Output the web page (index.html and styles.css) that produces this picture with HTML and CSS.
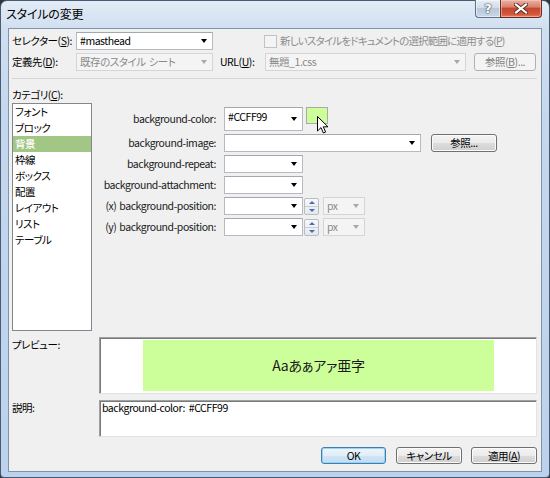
FILE: index.html
```html
<!DOCTYPE html>
<html lang="ja">
<head>
<meta charset="utf-8">
<title>スタイルの変更</title>
<link rel="stylesheet" href="styles.css">
</head>
<body>
<div class="window">
  <div class="titlebar">
    <span class="title">スタイルの変更</span>
    <div class="caption">
      <div class="cap-help">?</div>
      <div class="cap-close">
        <svg width="14" height="11" viewBox="0 0 14 11">
          <path d="M2 1.5 L12 9.5 M12 1.5 L2 9.5" stroke="#5a2a22" stroke-width="4" stroke-linecap="square"/>
          <path d="M2 1.5 L12 9.5 M12 1.5 L2 9.5" stroke="#ffffff" stroke-width="2.2" stroke-linecap="square"/>
        </svg>
      </div>
    </div>
  </div>
  <div class="client">
    <div class="row">
      <span class="lbl-top">セレクター(<u>S</u>):</span>
      <div class="combo w-sel"><span class="ctext">#masthead</span><span class="arrow"></span></div>
      <span class="chk"></span>
      <span class="chk-label">新しいスタイルをドキュメントの選択範囲に適用する(<u>P</u>)</span>
    </div>
    <div class="row row2">
      <span class="lbl-top">定義先(<u>D</u>):</span>
      <div class="combo w-sel disabled"><span class="ctext">既存のスタイル シート</span><span class="arrow"></span></div>
      <span class="lbl-url">URL(<u>U</u>):</span>
      <div class="combo w-url disabled"><span class="ctext">無題_1.css</span><span class="arrow"></span></div>
      <div class="btn btn-ref disabled">参照(<u>B</u>)...</div>
    </div>
    <div class="sep"></div>
    <div class="cat-label">カテゴリ(<u>C</u>):</div>
    <div class="main">
      <ul class="list">
        <li>フォント</li>
        <li>ブロック</li>
        <li class="sel">背景</li>
        <li>枠線</li>
        <li>ボックス</li>
        <li>配置</li>
        <li>レイアウト</li>
        <li>リスト</li>
        <li>テーブル</li>
      </ul>
      <div class="props">
        <span class="plabel">background-color:</span>
        <div class="ctl ctl-top">
          <div class="combo w-s tall"><span class="ctext">#CCFF99</span><span class="arrow"></span></div>
          <div class="swatch">
            <svg class="cursor" width="12" height="18" viewBox="0 0 12 18">
              <path d="M0.5 0.5 L0.5 15 L4 11.6 L6.4 17 L8.6 16 L6.3 10.8 L11 10.8 Z" fill="#ffffff" stroke="#000000" stroke-width="1" stroke-linejoin="round"/>
            </svg>
          </div>
        </div>

        <span class="plabel">background-image:</span>
        <div class="ctl">
          <div class="combo w-img"><span class="ctext"></span><span class="arrow"></span></div>
          <div class="btn btn-browse">参照...</div>
        </div>

        <span class="plabel">background-repeat:</span>
        <div class="ctl">
          <div class="combo w-s"><span class="ctext"></span><span class="arrow"></span></div>
        </div>

        <span class="plabel">background-attachment:</span>
        <div class="ctl">
          <div class="combo w-s"><span class="ctext"></span><span class="arrow"></span></div>
        </div>

        <span class="plabel">(x) background-position:</span>
        <div class="ctl">
          <div class="combo w-s"><span class="ctext"></span><span class="arrow"></span></div>
          <div class="spin"><span class="spin-up"><i></i></span><span class="spin-dn"><i></i></span></div>
          <div class="combo w-px disabled"><span class="ctext">px</span><span class="arrow"></span></div>
        </div>

        <span class="plabel">(y) background-position:</span>
        <div class="ctl">
          <div class="combo w-s"><span class="ctext"></span><span class="arrow"></span></div>
          <div class="spin"><span class="spin-up"><i></i></span><span class="spin-dn"><i></i></span></div>
          <div class="combo w-px disabled"><span class="ctext">px</span><span class="arrow"></span></div>
        </div>
      </div>
    </div>
    <div class="box-row preview-row">
      <span class="box-label">プレビュー:</span>
      <div class="sunken preview">
        <div class="sample">Aaあぁアァ亜字</div>
      </div>
    </div>
    <div class="box-row desc-row">
      <span class="box-label">説明:</span>
      <div class="sunken desc">background-color: #CCFF99</div>
    </div>
    <div class="buttons">
      <div class="btn btn-dlg btn-ok">OK</div>
      <div class="btn btn-dlg btn-cancel">キャンセル</div>
      <div class="btn btn-dlg btn-apply">適用(<u>A</u>)</div>
    </div>
  </div>
</div>
</body>
</html>
```

FILE: styles.css
```css
* { box-sizing: border-box; }

body {
  margin: 0;
  background: #2e3640;
  font-family: "Noto Sans CJK JP", "Noto Sans", sans-serif;
  font-size: 10.5px;
  letter-spacing: -0.45px;
  word-spacing: 1px;
  font-feature-settings: "palt";
  color: #000;
}

u { text-decoration: underline; text-underline-offset: 1px; }

.window {
  width: 550px;
  height: 478px;
  border: 1px solid #4a5a70;
  border-radius: 7px 7px 4px 4px;
  background: linear-gradient(to bottom, #e3ecf6 0, #d0dff0 28px, #c3d7ee 120px, #bcd2ec 100%);
  padding: 0 7px 5px 7px;
  display: flex;
  flex-direction: column;
}

.titlebar {
  height: 27px;
  display: flex;
  justify-content: space-between;
  flex: none;
}

.title {
  font-size: 12px;
  letter-spacing: -0.2px;
  line-height: 14px;
  padding-top: 6px;
  margin-left: -2px;
}

.caption {
  display: flex;
  height: 18px;
  margin-top: -1px;
}

.cap-help {
  width: 25px;
  height: 18px;
  border: 1px solid #5f7189;
  border-right: none;
  border-top: none;
  border-radius: 0 0 0 4px;
  background: linear-gradient(to bottom, #e6edf5 0, #d3dee9 45%, #b9c9da 50%, #c9d7e5 100%);
  box-shadow: inset 0 0 0 1px rgba(255,255,255,0.5);
  color: #fff;
  font: bold 13px/17px "DejaVu Sans", sans-serif;
  letter-spacing: 0;
  text-align: center;
  text-shadow: 0 0 1px #3d4a5a, 0 0 1px #3d4a5a, 0 0 2px #55667a;
}

.cap-close {
  width: 42px;
  height: 18px;
  border: 1px solid #6b2a20;
  border-top: none;
  border-radius: 0 0 4px 0;
  background: linear-gradient(to bottom, #eab1a3 0, #d98370 40%, #c4472f 50%, #d4583d 85%, #e0856c 100%);
  box-shadow: inset 0 0 0 1px rgba(255,220,210,0.45);
  display: flex;
  align-items: center;
  justify-content: center;
}

.client {
  flex: 1;
  border: 1px solid #7f93ab;
  background: #f0f0f0;
  padding: 3px 4px 0 3px;
  display: flex;
  flex-direction: column;
}

.row {
  display: flex;
  align-items: center;
  height: 18px;
  flex: none;
}

.row2 { margin-top: 3px; }

.lbl-top { width: 64px; line-height: 14px; white-space: nowrap; flex: none; }

.combo {
  height: 18px;
  border: 1px solid #b6b9c1;
  border-top-color: #a4a7af;
  background: #fff;
  display: flex;
  align-items: center;
  padding: 0 5px 0 3px;
  flex: none;
}

.ctext {
  flex: 1;
  line-height: 14px;
  white-space: nowrap;
  overflow: hidden;
}

.arrow {
  width: 0;
  height: 0;
  border-left: 3.5px solid transparent;
  border-right: 3.5px solid transparent;
  border-top: 4px solid #000;
  flex: none;
}

.combo.disabled {
  background: #f4f4f4;
  border-color: #d5d5d5;
  color: #8a8a8a;
}

.combo.disabled .arrow { border-top-color: #a8a8a8; }

.w-sel { width: 137px; }
.w-url { width: 201px; }
.w-s { width: 79px; }
.w-img { width: 197px; }
.w-px { width: 42px; height: 18px; }

.chk {
  width: 13px;
  height: 13px;
  border: 1px solid #c2c2c2;
  background: #f4f4f4;
  margin-left: 51px;
  flex: none;
}

.chk-label {
  margin-left: 3px;
  color: #8d8d8d;
  line-height: 14px;
  letter-spacing: -0.8px;
  white-space: nowrap;
}

.lbl-url {
  margin-left: 7px;
  width: 45px;
  line-height: 14px;
  white-space: nowrap;
  flex: none;
}

.btn {
  display: flex;
  align-items: center;
  justify-content: center;
  border: 1px solid #707070;
  border-radius: 3px;
  background: linear-gradient(to bottom, #f3f3f3 0, #ebebeb 50%, #dddddd 50%, #cfcfcf 100%);
  box-shadow: inset 0 0 0 1px #fbfbfb;
  line-height: 14px;
  white-space: nowrap;
  flex: none;
}

.btn.disabled {
  border-color: #adb2b5;
  background: #f4f4f4;
  box-shadow: none;
  color: #838383;
}

.btn-ref {
  margin-left: 8px;
  width: 62px;
  height: 18px;
}

.sep {
  margin-top: 7px;
  height: 1px;
  background: #d6d6d6;
  flex: none;
}

.cat-label {
  margin-top: 9px;
  height: 14px;
  line-height: 14px;
  flex: none;
}

.main {
  margin-top: 1px;
  display: flex;
  height: 228px;
  flex: none;
}

.list {
  width: 80px;
  height: 228px;
  margin: 0;
  padding: 0;
  list-style: none;
  border: 1px solid #828790;
  background: #fff;
  flex: none;
}

.list li {
  height: 16px;
  line-height: 16px;
  padding-left: 2px;
}

.list li.sel {
  background: #a2c683;
  color: #fff;
  font-weight: 500;
}

.props {
  display: grid;
  grid-template-columns: 124px auto;
  grid-template-rows: 24px repeat(5, 18px);
  column-gap: 8px;
  row-gap: 3px;
  padding-top: 4px;
  align-items: center;
  align-content: start;
}

.plabel {
  text-align: right;
  line-height: 14px;
  white-space: nowrap;
  color: #1a1a1a;
}

.ctl {
  display: flex;
  align-items: center;
}

.ctl-top { align-items: flex-start; height: 24px; }

.combo.tall {
  height: 24px;
}

.combo.tall .ctext {
  align-self: flex-start;
  padding-top: 2px;
}

.swatch {
  position: relative;
  width: 22px;
  height: 17px;
  margin-left: 3px;
  border: 1px solid #a9a9a9;
  background: #ccff99;
  flex: none;
}

.cursor {
  position: absolute;
  left: 10px;
  top: 8px;
}

.btn-browse {
  margin-left: 10px;
  width: 66px;
  height: 18px;
}

.spin {
  width: 15px;
  height: 17px;
  margin-left: 1px;
  display: flex;
  flex-direction: column;
  border: 1px solid #b8bcc4;
  border-radius: 2px;
  background: linear-gradient(to bottom, #f6f8fa, #e4e9ef);
  flex: none;
}

.spin-up, .spin-dn {
  flex: 1;
  display: flex;
  align-items: center;
  justify-content: center;
}

.spin-up { border-bottom: 1px solid #c8ccd3; }

.spin-up i {
  width: 0; height: 0;
  border-left: 3px solid transparent;
  border-right: 3px solid transparent;
  border-bottom: 3px solid #4a6ea6;
}

.spin-dn i {
  width: 0; height: 0;
  border-left: 3px solid transparent;
  border-right: 3px solid transparent;
  border-top: 3px solid #4a6ea6;
}

.w-px { margin-left: 4px; }

.box-row {
  display: flex;
  flex: none;
}

.box-label {
  width: 87px;
  line-height: 14px;
  margin-top: 1px;
  flex: none;
}

.sunken {
  flex: 1;
  background: #fff;
  border: 1px solid;
  border-color: #a0a0a0 #e3e3e3 #e3e3e3 #a0a0a0;
  box-shadow: inset 1px 1px 0 #7a7a7a;
}

.preview-row { margin-top: 6px; }

.preview {
  height: 57px;
  padding: 2px 0 0 43px;
}

.sample {
  width: 351px;
  height: 51px;
  background: #ccff99;
  font-size: 14px;
  letter-spacing: -0.2px;
  line-height: 51px;
  text-align: center;
  color: #1a1a1a;
}

.desc-row { margin-top: 6px; }

.desc {
  height: 37px;
  padding: 0 2px;
  line-height: 14px;
  word-spacing: 2px;
}

.buttons {
  margin-top: 10px;
  display: flex;
  justify-content: flex-end;
  gap: 10px;
  flex: none;
}

.btn-dlg {
  height: 17px;
  width: 66px;
}

.btn-ok {
  width: 65px;
  border-color: #3c7fb1;
  background: linear-gradient(to bottom, #edf5fb 0, #e1eef8 50%, #d0e5f5 50%, #c3ddf1 100%);
  box-shadow: inset 0 0 0 1px #9fd2f2;
}

.btn-cancel { margin-right: -1px; }
```
